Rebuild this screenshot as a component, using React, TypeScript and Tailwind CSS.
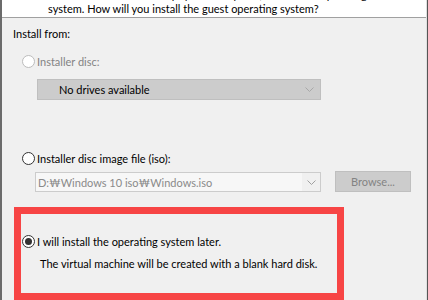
function Radio({ checked = false, disabled = false }: { checked?: boolean; disabled?: boolean }) {
  return (
    <span
      className={
        "flex h-[13px] w-[13px] shrink-0 items-center justify-center rounded-full border bg-white " +
        (disabled ? "border-[#bcbcbc]" : "border-[#333333]")
      }
    >
      {checked && <span className="h-[7px] w-[7px] rounded-full bg-[#333333]" />}
    </span>
  );
}

function Chevron({ color }: { color: string }) {
  return (
    <svg width="9" height="5" viewBox="0 0 9 5" fill="none" stroke={color} strokeWidth="1">
      <path d="M0.5 0.5 L4.5 4.5 L8.5 0.5" />
    </svg>
  );
}

export default function App() {
  return (
    <div className="flex h-[300px] w-[428px] overflow-hidden bg-[#f0f0f0] font-['Lato',sans-serif] text-[11px] leading-[15px] text-black">
      <div className="w-[2px] shrink-0 bg-[#6b6b6b]" />
      <div className="flex min-w-0 flex-1 flex-col">
        {/* header */}
        <div className="h-[18px] shrink-0 overflow-hidden border-b border-[#a0a0a0] bg-white pl-[46px]">
          <div className="-mt-[13px] h-[14px] whitespace-nowrap">
            A virtual machine is like a physical computer; it needs an operating
          </div>
          <div className="whitespace-nowrap">system. How will you install the guest operating system?</div>
        </div>

        <div className="ml-[11px] mt-[8px]">Install from:</div>

        {/* installer disc */}
        <div className="ml-[20px] mt-[13px] flex h-[15px] items-center gap-[2px] text-[#838383]">
          <Radio disabled />
          <span>Installer disc:</span>
        </div>
        <div className="ml-[35px] mt-[10px] flex h-[21px] w-[284px] items-center justify-between border border-[#bfbfbf] bg-[#cccccc] pl-[21px] pr-[6px]">
          <span>No drives available</span>
          <Chevron color="#a8a8a8" />
        </div>

        {/* iso */}
        <div className="ml-[20px] mt-[51px] flex h-[15px] items-center gap-[2px]">
          <Radio />
          <span>Installer disc image file (iso):</span>
        </div>
        <div className="ml-[33px] mt-[6px] flex items-start gap-[14px]">
          <div className="flex h-[20px] w-[286px] items-center border border-[#cccccc] bg-[#f0f0f0]">
            <div className="flex h-full flex-1 items-center bg-[#f7f7f7] pl-[2px] text-[#8a8a8a]">
              D:₩Windows 10 iso₩Windows.iso
            </div>
            <div className="flex w-[18px] items-center justify-center">
              <Chevron color="#a0a0a0" />
            </div>
          </div>
          <button className="-mt-px flex h-[21px] w-[76px] items-center justify-center border border-[#bfbfbf] bg-[#cccccc] text-[#838383]">
            Browse...
          </button>
        </div>

        {/* highlighted option */}
        <div className="ml-[12px] mt-[15px] h-[93px] w-[330px] shrink-0 border-[7px] border-[#f74545] pt-[20px]">
          <div className="ml-px flex h-[15px] items-center gap-[2px]">
            <Radio checked />
            <span>I will install the operating system later.</span>
          </div>
          <div className="ml-[19px] mt-[7px] whitespace-nowrap">
            The virtual machine will be created with a blank hard disk.
          </div>
        </div>
      </div>
      <div className="w-px shrink-0 bg-[#e0e0e0]" />
      <div className="w-px shrink-0 bg-[#555555]" />
    </div>
  );
}
